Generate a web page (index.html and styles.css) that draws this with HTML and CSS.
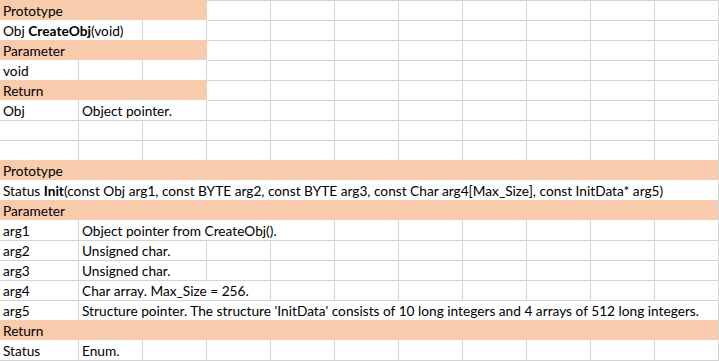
FILE: index.html
```html
<!DOCTYPE html>
<html>
<head>
<meta charset="utf-8">
<link rel="stylesheet" href="styles.css">
</head>
<body>
<div class="sheet">
  <!-- row 0 -->
  <div class="c o oe s3">Prototype</div>
  <div class="c"></div><div class="c"></div><div class="c"></div><div class="c"></div><div class="c"></div><div class="c"></div><div class="c"></div><div class="c"></div>
  <!-- row 1 -->
  <div class="c w s2">Obj <b>CreateObj</b>(void)</div>
  <div class="c w"></div>
  <div class="c"></div><div class="c"></div><div class="c"></div><div class="c"></div><div class="c"></div><div class="c"></div><div class="c"></div><div class="c"></div>
  <!-- row 2 -->
  <div class="c o oe s3">Parameter</div>
  <div class="c"></div><div class="c"></div><div class="c"></div><div class="c"></div><div class="c"></div><div class="c"></div><div class="c"></div><div class="c"></div>
  <!-- row 3 -->
  <div class="c w">void</div><div class="c w"></div><div class="c w"></div>
  <div class="c"></div><div class="c"></div><div class="c"></div><div class="c"></div><div class="c"></div><div class="c"></div><div class="c"></div><div class="c"></div>
  <!-- row 4 -->
  <div class="c o oe s3">Return</div>
  <div class="c"></div><div class="c"></div><div class="c"></div><div class="c"></div><div class="c"></div><div class="c"></div><div class="c"></div><div class="c"></div>
  <!-- row 5 -->
  <div class="c w">Obj</div><div class="c w s2">Object pointer.</div>
  <div class="c"></div><div class="c"></div><div class="c"></div><div class="c"></div><div class="c"></div><div class="c"></div><div class="c"></div><div class="c"></div>
  <!-- row 6 -->
  <div class="c"></div><div class="c"></div><div class="c"></div><div class="c"></div><div class="c"></div><div class="c"></div><div class="c"></div><div class="c"></div><div class="c"></div><div class="c"></div><div class="c"></div>
  <!-- row 7 -->
  <div class="c"></div><div class="c"></div><div class="c"></div><div class="c"></div><div class="c"></div><div class="c"></div><div class="c"></div><div class="c"></div><div class="c"></div><div class="c"></div><div class="c"></div>
  <!-- row 8 -->
  <div class="c o s11">Prototype</div>
  <!-- row 9 -->
  <div class="c w s11">Status <b>Init</b>(const Obj arg1, const BYTE arg2, const BYTE arg3, const Char arg4[Max_Size], const InitData* arg5)</div>
  <!-- row 10 -->
  <div class="c o s11">Parameter</div>
  <!-- row 11 -->
  <div class="c w">arg1</div><div class="c w s4">Object pointer from CreateObj().</div>
  <div class="c w"></div><div class="c w"></div><div class="c w"></div><div class="c w"></div><div class="c w"></div><div class="c w"></div>
  <!-- row 12 -->
  <div class="c">arg2</div><div class="c s2">Unsigned char.</div>
  <div class="c"></div><div class="c"></div><div class="c"></div><div class="c"></div><div class="c"></div><div class="c"></div><div class="c"></div><div class="c"></div>
  <!-- row 13 -->
  <div class="c">arg3</div><div class="c s2">Unsigned char.</div>
  <div class="c"></div><div class="c"></div><div class="c"></div><div class="c"></div><div class="c"></div><div class="c"></div><div class="c"></div><div class="c"></div>
  <!-- row 14 -->
  <div class="c">arg4</div><div class="c s3">Char array. Max_Size = 256.</div>
  <div class="c"></div><div class="c"></div><div class="c"></div><div class="c"></div><div class="c"></div><div class="c"></div><div class="c"></div>
  <!-- row 15 -->
  <div class="c">arg5</div><div class="c s10">Structure pointer. The structure 'InitData' consists of 10 long integers and 4 arrays of 512 long integers.</div>
  <!-- row 16 -->
  <div class="c o s11">Return</div>
  <!-- row 17 -->
  <div class="c w">Status</div><div class="c w">Enum.</div>
  <div class="c w"></div><div class="c w"></div><div class="c w"></div><div class="c w"></div><div class="c w"></div><div class="c w"></div><div class="c w"></div><div class="c w"></div><div class="c w"></div>
</div>
</body>
</html>
```
FILE: styles.css
```css
html, body {
  margin: 0;
  padding: 0;
  background: #ffffff;
}
.sheet {
  display: grid;
  grid-template-columns: 79px repeat(10, 64px);
  grid-auto-rows: 20px;
  width: 719px;
  border-bottom: 1px solid #d4d4d4;
  font-family: Lato, "Liberation Sans", sans-serif;
  font-size: 13.7px;
  color: #000;
}
.c {
  box-sizing: border-box;
  border-top: 1px solid #d4d4d4;
  border-right: 1px solid #d4d4d4;
  padding-left: 3px;
  padding-top: 1px;
  line-height: 18px;
  white-space: nowrap;
  overflow: hidden;
}
.c b { font-weight: 700; }
.w { border-top-color: #ffffff; }
.o { background: #f8cbad; border-top-color: #f8cbad; }
.oe { border-right-color: #f8cbad; }
.s2 { grid-column: span 2; }
.s3 { grid-column: span 3; }
.s4 { grid-column: span 4; }
.s10 { grid-column: span 10; }
.s11 { grid-column: span 11; }
```
